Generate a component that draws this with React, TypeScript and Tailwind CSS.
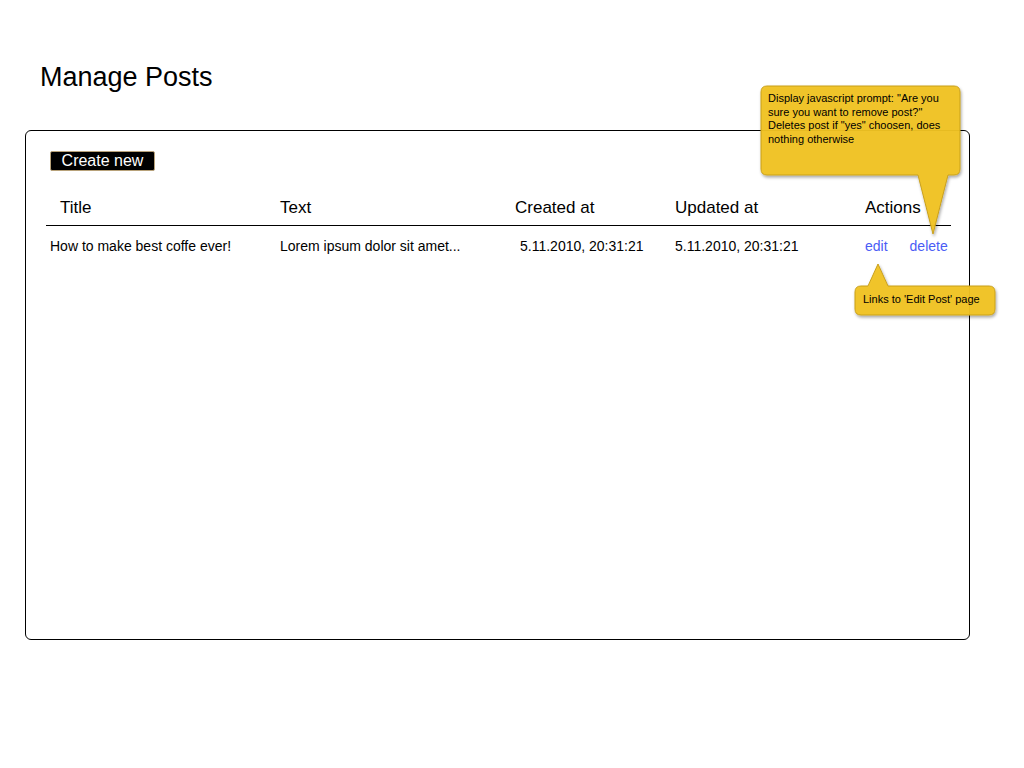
import React from 'react';

const rows = [
  {
    title: 'How to make best coffe ever!',
    text: 'Lorem ipsum dolor sit amet...',
    created: '5.11.2010, 20:31:21',
    updated: '5.11.2010, 20:31:21',
  },
];

function Callouts() {
  return (
    <div className="pointer-events-none absolute inset-0">
      <svg width="1024" height="768" className="absolute left-0 top-0">
        <defs>
          <filter id="sh" x="-20%" y="-20%" width="140%" height="140%">
            <feDropShadow dx="1" dy="2" stdDeviation="1.5" floodColor="#000" floodOpacity="0.35" />
          </filter>
        </defs>
        {/* delete note */}
        <path
          d="M767 86 H954 Q960 86 960 92 V169 Q960 175 954 175 H948 L933 234 L918 175 H767 Q761 175 761 169 V92 Q761 86 767 86 Z"
          fill="#f1c322"
          fillOpacity="0.95"
          stroke="#c9a01c"
          strokeWidth="1"
          filter="url(#sh)"
        />
        {/* edit note */}
        <path
          d="M861 286 H868 L878 264 L888 286 H989 Q995 286 995 292 V309 Q995 315 989 315 H861 Q855 315 855 309 V292 Q855 286 861 286 Z"
          fill="#f1c322"
          fillOpacity="0.95"
          stroke="#c9a01c"
          strokeWidth="1"
          filter="url(#sh)"
        />
      </svg>
      <div className="absolute left-[768px] top-[92px] w-[190px] text-[11px] leading-[13.5px] text-black">
        Display javascript prompt: "Are you sure you want to remove post?" Deletes post if "yes" choosen, does nothing otherwise
      </div>
      <div className="absolute left-[863px] top-[293px] text-[11px] leading-[13px] text-black">
        Links to 'Edit Post' page
      </div>
    </div>
  );
}

export default function App() {
  return (
    <div
      className="relative h-[768px] w-[1024px] overflow-hidden bg-white text-black"
      style={{ fontFamily: '"Liberation Sans", Arial, sans-serif' }}
    >
      <div className="pl-[40px] pr-[54px] pt-[61px]">
        <h1 className="text-[27px] leading-[32px]">Manage Posts</h1>

        <div className="-ml-[15px] mt-[37px] h-[510px] rounded-[6px] border border-black pl-[24px] pr-[19px] pt-[20px]">
          <button className="block h-[20px] w-[105px] rounded-[2px] border border-[#b8a27a] bg-black text-[16px] leading-[18px] text-white">
            Create new
          </button>

          <div className="mt-[26px] w-[905px] -ml-[4px]">
            <div className="flex h-[29px] items-start border-b border-black text-[17px] leading-[22px]">
              <div className="w-[234px] pl-[14px]">Title</div>
              <div className="w-[235px]">Text</div>
              <div className="w-[160px]">Created at</div>
              <div className="w-[190px]">Updated at</div>
              <div>Actions</div>
            </div>
            {rows.map((r) => (
              <div key={r.title} className="flex pt-[11px] text-[14px] leading-[18px]">
                <div className="w-[234px] pl-[4px]">{r.title}</div>
                <div className="w-[240px]">{r.text}</div>
                <div className="w-[155px]">{r.created}</div>
                <div className="w-[190px]">{r.updated}</div>
                <div className="flex gap-[22px] text-[#4a5cf5]">
                  <a>edit</a>
                  <a>delete</a>
                </div>
              </div>
            ))}
          </div>
        </div>
      </div>
      <Callouts />
    </div>
  );
}
